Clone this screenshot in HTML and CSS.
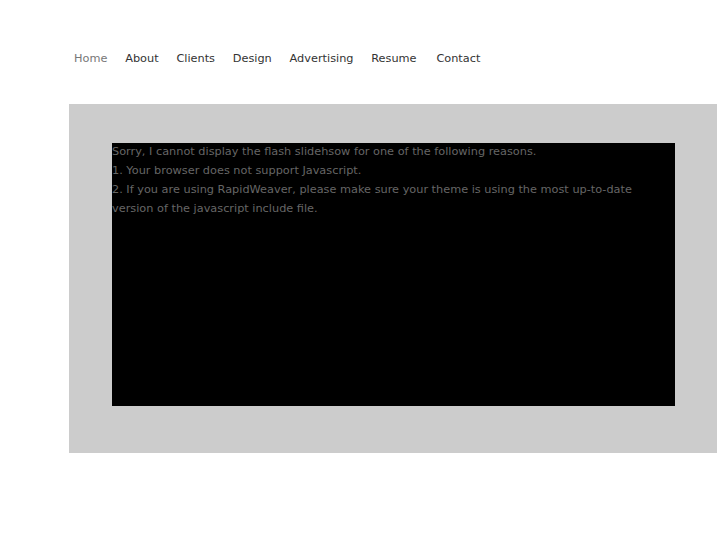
FILE: index.html
```html
<!DOCTYPE html>
<html>
<head>
<meta charset="utf-8">
<link rel="stylesheet" href="styles.css">
</head>
<body>
<div class="page">
  <nav class="nav">
    <a class="nav-item current">Home</a>
    <a class="nav-item">About</a>
    <a class="nav-item">Clients</a>
    <a class="nav-item">Design</a>
    <a class="nav-item">Advertising</a>
    <a class="nav-item">Resume</a>
    <a class="nav-item">Contact</a>
  </nav>
  <div class="stage">
    <div class="slideshow">
      <p>Sorry, I cannot display the flash slidehsow for one of the following reasons.<br>
      1. Your browser does not support Javascript.<br>
      2. If you are using RapidWeaver, please make sure your theme is using the most up-to-date version of the javascript include file.</p>
    </div>
  </div>
</div>
</body>
</html>
```

FILE: styles.css
```css
html, body {
  margin: 0;
  padding: 0;
  background: #fff;
}
body {
  font-family: "DejaVu Sans", sans-serif;
}
.page {
  padding-left: 69px;
  width: 648px;
}
.nav {
  display: flex;
  align-items: center;
  height: 104px;
  padding-left: 5px;
  box-sizing: border-box;
  padding-top: 12px;
  gap: 17.8px;
}
.nav-item {
  font-size: 11.3px;
  color: #333;
  text-decoration: none;
}
.nav-item.current {
  color: #777;
}
.nav-item:nth-child(7) {
  margin-left: 2px;
}
.stage {
  background: #cccccc;
  height: 349px;
  padding: 39px 42px 0 43px;
  box-sizing: border-box;
}
.slideshow {
  background: #000;
  height: 263px;
  overflow: hidden;
}
.slideshow p {
  margin: -1px 0 0 0;
  font-size: 11.3px;
  line-height: 19px;
  color: #666;
}
```
